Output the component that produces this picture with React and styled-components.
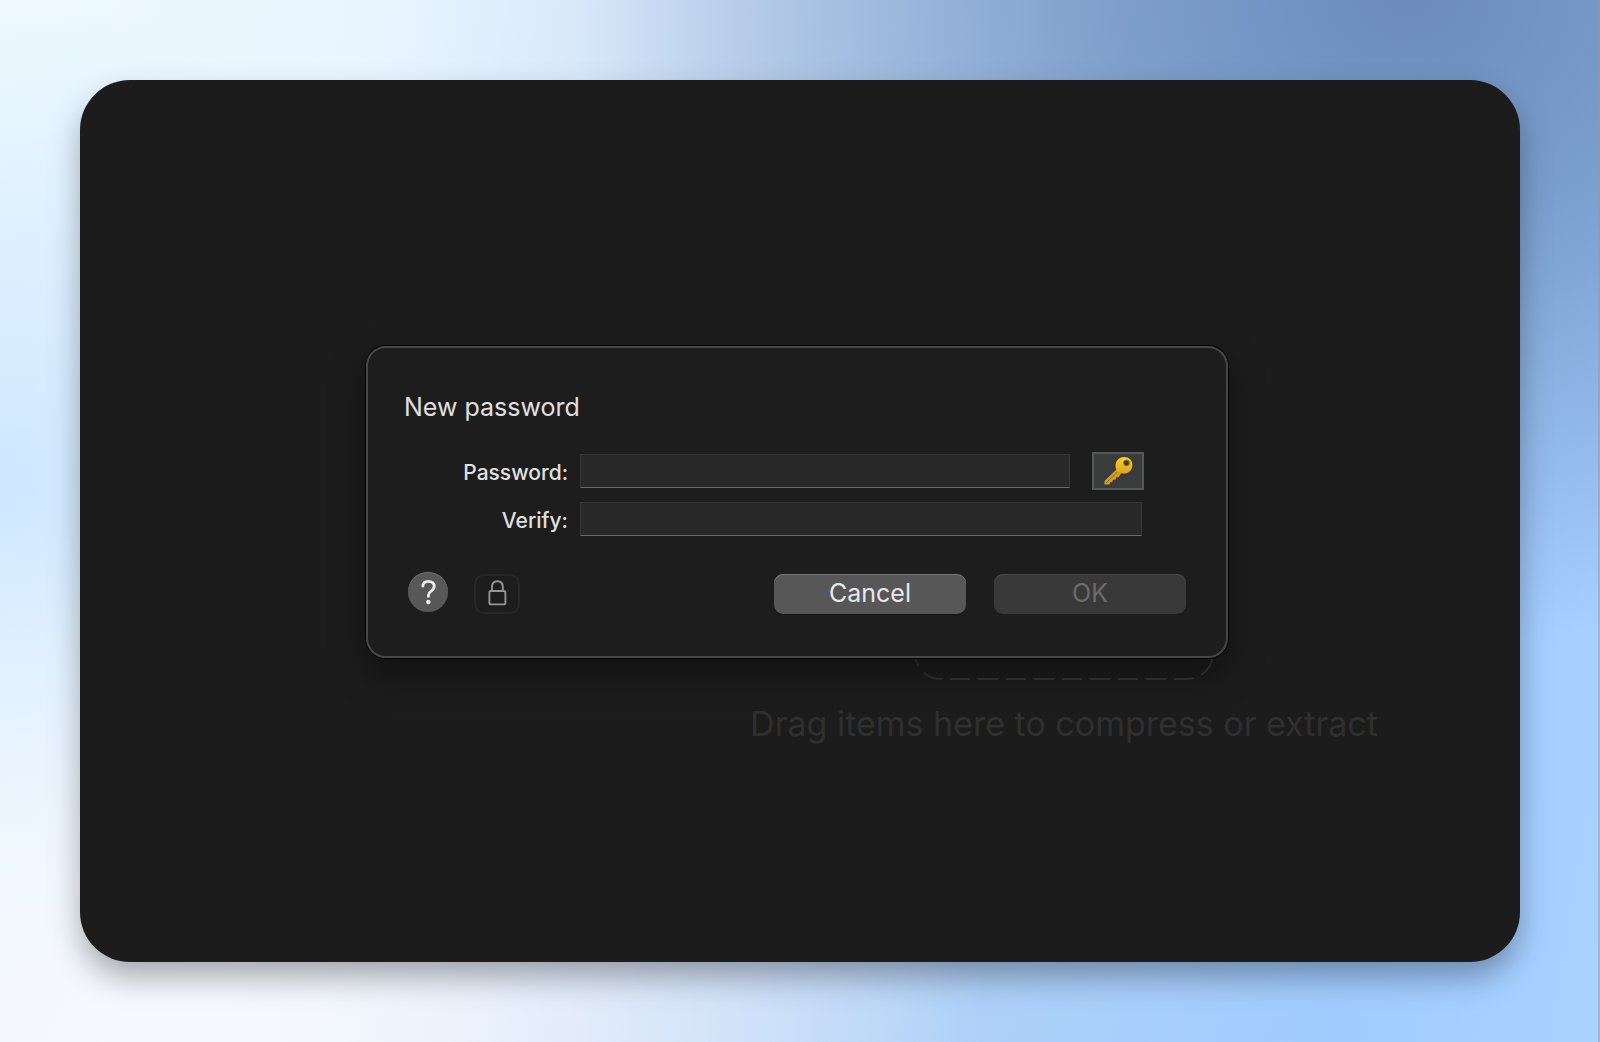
import styled, { createGlobalStyle } from 'styled-components';

const GlobalStyle = createGlobalStyle`
  * {
    box-sizing: border-box;
  }

  body {
    margin: 0;
    font-family: Inter, 'Liberation Sans', sans-serif;
    color: #e0e0e0;
  }
`;

const Desktop = styled.div`
  display: flex;
  min-height: 100vh;
  padding: 80px;
  box-shadow: inset -2px 0 0 rgba(150, 150, 160, 0.45);
  background:
    radial-gradient(ellipse 52% 62% at 88% 0%, #6b8cba 0%, rgba(107, 140, 186, 0.72) 35%, rgba(107, 140, 186, 0) 100%),
    radial-gradient(ellipse 50% 50% at 12% 100%, #f7f9fe 0%, rgba(247, 249, 254, 0) 100%),
    radial-gradient(ellipse 30% 46% at 0% 46%, #cfe8ff 0%, rgba(207, 232, 255, 0) 100%),
    linear-gradient(100deg, #eef9ff 0%, #e8f5ff 22%, #c9dcf6 44%, #aed0f8 64%, #a0ccff 85%, #a8d2ff 100%);
`;

const Window = styled.main`
  position: relative;
  display: flex;
  flex: 1;
  border-radius: 50px;
  background: #1c1c1c;
  box-shadow: 0 16px 32px -2px rgba(0, 0, 0, 0.34);
`;

const DropArea = styled.section`
  display: flex;
  flex: 1;
  flex-direction: column;
  align-items: center;
  justify-content: center;
  gap: 20px;
  margin-left: 528px;
  padding-top: 86px;
`;

const DropFrame = styled.svg`
  width: 300px;
  height: 300px;
  fill: none;
  stroke: #343434;
  stroke-width: 2;
`;

const DropHint = styled.p`
  margin: 0;
  font-size: 34px;
  line-height: 48px;
  color: #2f2f2f;
  white-space: nowrap;
`;

const Overlay = styled.div`
  position: absolute;
  inset: 0;
  display: flex;
  align-items: center;
  justify-content: center;
  padding: 0 6px 38px 0;
`;

const Dialog = styled.form`
  width: 862px;
  padding: 42px 40px 40px;
  border: 2px solid #484848;
  border-radius: 20px;
  background: #1d1d1d;
  box-shadow:
    0 0 0 1px #000,
    0 16px 36px rgba(0, 0, 0, 0.4);
`;

const Title = styled.h1`
  margin: 0 0 28px -4px;
  font-size: 25px;
  font-weight: 400;
  line-height: 34px;
`;

const Fields = styled.div`
  display: grid;
  grid-template-columns: 160px 1fr;
  column-gap: 12px;
  row-gap: 10px;
  align-items: center;
  padding-right: 42px;
`;

const Label = styled.label`
  padding-top: 4px;
  font-size: 21px;
  font-weight: 500;
  line-height: 28px;
  text-align: right;
`;

const FieldRow = styled.div`
  display: flex;
  align-items: center;
  gap: 22px;
  height: 38px;
`;

const TextField = styled.input`
  flex: 1;
  min-width: 0;
  height: 34px;
  margin: 0;
  margin-right: ${({ $wide }) => ($wide ? '2px' : '0')};
  padding: 0 8px;
  border: 1px solid #363636;
  border-bottom-color: #6a6a6a;
  border-radius: 0;
  background: #292929;
  color: inherit;
  font: inherit;
  font-size: 21px;
  outline: none;
`;

const KeyButton = styled.button`
  display: flex;
  align-items: center;
  justify-content: center;
  width: 52px;
  height: 38px;
  padding: 0;
  border: 2px solid #575757;
  background: #3a3b3b;
`;

const Footer = styled.div`
  display: flex;
  align-items: center;
  margin-top: 34px;
`;

const HelpButton = styled.button`
  width: 40px;
  height: 40px;
  margin: 0 26px 4px 0;
  padding: 0;
  border: 0;
  border-radius: 50%;
  background: #585858;
  box-shadow: inset 0 1px 0 #6c6c6c;
  color: #ececec;
`;

const LockButton = styled.button`
  display: flex;
  align-items: center;
  justify-content: center;
  width: 46px;
  height: 40px;
  margin-right: auto;
  padding: 0;
  border: 2px solid #272727;
  border-radius: 10px;
  background: transparent;
  color: #959595;
`;

const PushButton = styled.button`
  width: 192px;
  height: 40px;
  margin-left: 28px;
  padding: 0 0 2px;
  border: 0;
  border-radius: 9px;
  background: #575757;
  box-shadow:
    inset 0 1px 0 #757575,
    0 1px 1px rgba(0, 0, 0, 0.3);
  color: #e8e8e8;
  font: inherit;
  font-size: 25px;
  line-height: 34px;

  &:disabled {
    background: #393939;
    box-shadow: inset 0 1px 0 #4a4a4a;
    color: #6b6b6b;
  }
`;

function KeyIcon() {
  return (
    <svg width='30' height='30' viewBox='0 0 30 30' aria-hidden='true'>
      <defs>
        <linearGradient id='gold' x1='0' y1='0' x2='0' y2='1'>
          <stop offset='0' stopColor='#fbd51f' />
          <stop offset='1' stopColor='#d9a321' />
        </linearGradient>
      </defs>
      <path d='M13.5 13.5 L1.5 25 L1.5 28.6 L6.5 28.6 L7 26.3 L9.3 26.3 L9.8 23.8 L12.5 23.8 L13.3 21.2 L15.5 21.2 L18 17.5 Z' fill='#d5a021' />
      <path d='M14.5 16 L3 27' stroke='#8d6a1d' strokeWidth='1' />
      <path
        fillRule='evenodd'
        fill='url(#gold)'
        d='M21 1 C26 1 29.4 4.5 29.4 9 C29.4 14 25.5 17.6 20.7 17.6 C15.7 17.6 12.5 14.5 12.5 10 C12.5 5 16 1 21 1 Z M23.5 4 A2.9 2.9 0 1 0 23.5 9.8 A2.9 2.9 0 1 0 23.5 4 Z'
      />
      <circle cx='23.5' cy='6.9' r='2.9' fill='none' stroke='#9a741a' />
    </svg>
  );
}

function HelpIcon() {
  return (
    <svg width='40' height='40' viewBox='0 0 40 40' fill='none' aria-hidden='true'>
      <path
        d='M14.8 14.2 C15 10.8 17.4 9.3 20.4 9.3 C23.8 9.3 26.2 11.3 26.2 14.3 C26.2 16.6 25 17.9 23.1 19.2 C21.2 20.5 20.4 21.5 20.4 23.2 V24.4'
        stroke='currentColor'
        strokeWidth='2.8'
        strokeLinecap='round'
      />
      <circle cx='20.3' cy='30' r='2.2' fill='currentColor' />
    </svg>
  );
}

function LockIcon() {
  return (
    <svg width='20' height='28' viewBox='0 0 20 28' fill='none' stroke='currentColor' strokeWidth='1.9' aria-hidden='true'>
      <rect x='2.4' y='11' width='16' height='13.4' rx='1.6' />
      <path d='M5 10.8 V7 C5 3.4 7.2 1.2 10.4 1.2 C13.6 1.2 15.8 3.4 15.8 7 V10.8' />
    </svg>
  );
}

function App() {
  return (
    <>
      <GlobalStyle />
      <Desktop>
        <Window>
          <DropArea>
            <DropFrame viewBox='0 0 300 300' aria-hidden='true'>
              <rect x='1' y='1' width='298' height='298' rx='26' strokeDasharray='20 8' strokeDashoffset='-6' />
            </DropFrame>
            <DropHint>Drag items here to compress or extract</DropHint>
          </DropArea>
          <Overlay>
            <Dialog onSubmit={(event) => event.preventDefault()}>
              <Title>New password</Title>
              <Fields>
                <Label htmlFor='password'>Password:</Label>
                <FieldRow>
                  <TextField id='password' type='password' />
                  <KeyButton type='button' aria-label='Generate password'>
                    <KeyIcon />
                  </KeyButton>
                </FieldRow>
                <Label htmlFor='verify'>Verify:</Label>
                <FieldRow>
                  <TextField id='verify' type='password' $wide />
                </FieldRow>
              </Fields>
              <Footer>
                <HelpButton type='button' aria-label='Help'>
                  <HelpIcon />
                </HelpButton>
                <LockButton type='button' aria-label='Lock'>
                  <LockIcon />
                </LockButton>
                <PushButton type='button'>Cancel</PushButton>
                <PushButton type='submit' disabled>
                  OK
                </PushButton>
              </Footer>
            </Dialog>
          </Overlay>
        </Window>
      </Desktop>
    </>
  );
}

export default App;
